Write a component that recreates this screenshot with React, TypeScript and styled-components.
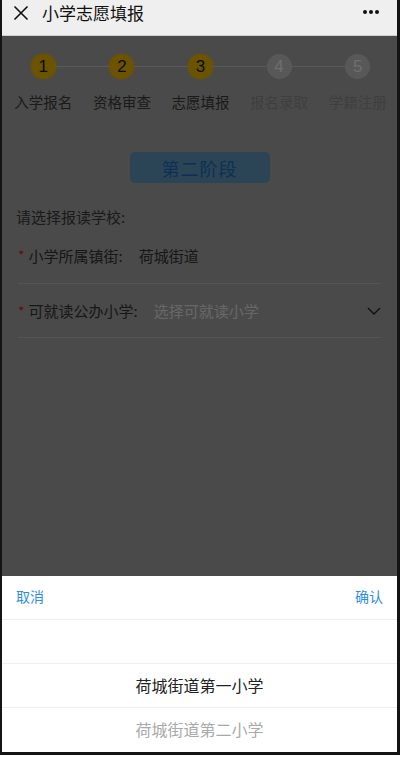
import React from 'react'
import styled, { createGlobalStyle } from 'styled-components'

const GlobalStyle = createGlobalStyle`
  html, body {
    margin: 0;
    padding: 0;
    background: #ffffff;
  }
  body {
    font-family: "Noto Sans CJK SC", "Noto Sans", "Liberation Sans", sans-serif;
  }
`

const Frame = styled.div`
  position: relative;
  width: 400px;
  height: 755px;
  box-sizing: border-box;
  border-left: 2px solid #141414;
  border-right: 3px solid #141414;
  border-bottom: 3px solid #141414;
  overflow: hidden;
  display: flex;
  flex-direction: column;
  background: #a4a4a4;
`

const TopBar = styled.div`
  height: 35px;
  flex-shrink: 0;
  background: #efefef;
  border-bottom: 1px solid #cfcfcf;
  display: flex;
  align-items: flex-start;
  padding: 0 16px 0 11px;
  position: relative;
  z-index: 3;
`

const CloseIcon = styled.svg`
  width: 16px;
  height: 16px;
  margin-top: 5px;
  flex-shrink: 0;
`

const Title = styled.div`
  margin-left: 13px;
  font-size: 17px;
  line-height: 26px;
  color: #111;
  flex: 1;
`

const Dots = styled.div`
  display: flex;
  gap: 2px;
  margin-top: 10px;
  margin-right: 2px;
`

const Dot = styled.span`
  width: 4px;
  height: 4px;
  border-radius: 50%;
  background: #111;
`

const Page = styled.div`
  flex: 1;
  display: flex;
  flex-direction: column;
`

const Steps = styled.div`
  display: flex;
  padding: 18px 0 0 2px;
`

const Step = styled.div`
  flex: 1;
  display: flex;
  flex-direction: column;
  align-items: center;
  position: relative;
`

const Connector = styled.span<{ $side: 'left' | 'right' }>`
  position: absolute;
  top: 12px;
  height: 1px;
  background: #c6c6c6;
  ${(p) => (p.$side === 'left' ? 'left: 0; right: calc(50% + 12px);' : 'right: 0; left: calc(50% + 12px);')}
`

const Circle = styled.div<{ $done: boolean }>`
  width: 25px;
  height: 25px;
  border-radius: 50%;
  background: ${(p) => (p.$done ? '#eeb800' : '#c4c4c4')};
  color: ${(p) => (p.$done ? '#1a1a1a' : '#f2f2f2')};
  font-family: "Liberation Sans", "Noto Sans", sans-serif;
  font-size: 17px;
  display: flex;
  align-items: center;
  justify-content: center;
  box-shadow: ${(p) => (p.$done ? '0 0 2px 1px rgba(238,184,0,0.5)' : 'none')};
`

const StepLabel = styled.div<{ $done: boolean }>`
  margin-top: 14px;
  font-size: 14.5px;
  line-height: 18px;
  color: ${(p) => (p.$done ? '#3a3a3a' : '#8c8c8c')};
  white-space: nowrap;
`

const StageWrap = styled.div`
  display: flex;
  justify-content: center;
  margin-top: 41px;
`

const StageButton = styled.div`
  width: 140px;
  height: 31px;
  border-radius: 5px;
  background: #6199c0;
  color: #1f6cb4;
  font-size: 18px;
  display: flex;
  align-items: center;
  justify-content: center;
  letter-spacing: 1px;
`

const Prompt = styled.div`
  margin: 24px 0 0 14px;
  font-size: 15px;
  line-height: 20px;
  color: #3a3a3a;
`

const Field = styled.div<{ $height: number }>`
  margin: 0 16px;
  height: ${(p) => p.$height}px;
  box-sizing: border-box;
  border-bottom: 1px solid #bcbcbc;
  display: flex;
  align-items: center;
`

const FirstField = styled(Field)`
  margin-top: 2px;
  padding-bottom: 2px;
`

const Star = styled.span`
  color: #d81e1e;
  font-size: 14px;
  margin-right: 4px;
`

const Label = styled.span`
  font-size: 15px;
  color: #333;
  margin-right: 16px;
  white-space: nowrap;
`

const Value = styled.span<{ $placeholder?: boolean }>`
  flex: 1;
  font-size: 15px;
  color: ${(p) => (p.$placeholder ? '#e4e4e4' : '#333')};
`

const Chevron = styled.svg`
  width: 14px;
  height: 8px;
  flex-shrink: 0;
`

const Mask = styled.div`
  position: absolute;
  inset: 0;
  background: rgba(0, 0, 0, 0.55);
  z-index: 1;
`

const Sheet = styled.div`
  position: absolute;
  left: 0;
  right: 0;
  bottom: 0;
  height: 176px;
  background: #fff;
  z-index: 2;
  display: flex;
  flex-direction: column;
`

const SheetHead = styled.div`
  height: 44px;
  flex-shrink: 0;
  display: flex;
  justify-content: space-between;
  align-items: center;
  padding: 0 14px 3px;
  box-sizing: border-box;
  border-bottom: 1px solid #efefef;
`

const SheetAction = styled.span`
  color: #2f8ee4;
  font-size: 14px;
`

const Option = styled.div<{ $tone: 'empty' | 'active' | 'muted' }>`
  height: 44px;
  flex-shrink: 0;
  box-sizing: border-box;
  padding-bottom: 2px;
  display: flex;
  align-items: center;
  justify-content: center;
  font-size: 16px;
  color: ${(p) => (p.$tone === 'active' ? '#222' : '#a9a9a9')};
  border-bottom: ${(p) => (p.$tone === 'muted' ? 'none' : '1px solid #efefef')};
`

const steps = [
  { n: 1, label: '入学报名', done: true },
  { n: 2, label: '资格审查', done: true },
  { n: 3, label: '志愿填报', done: true },
  { n: 4, label: '报名录取', done: false },
  { n: 5, label: '学籍注册', done: false },
]

const App: React.FC = () => (
  <>
    <GlobalStyle />
    <Frame>
      <TopBar>
        <CloseIcon viewBox="0 0 16 16">
          <path d="M1.5 1.5 L14.5 14.5 M14.5 1.5 L1.5 14.5" stroke="#111" strokeWidth="1.6" fill="none" />
        </CloseIcon>
        <Title>小学志愿填报</Title>
        <Dots>
          <Dot />
          <Dot />
          <Dot />
        </Dots>
      </TopBar>

      <Page>
        <Steps>
          {steps.map((s, i) => (
            <Step key={s.n}>
              {i > 0 && <Connector $side="left" />}
              {i < steps.length - 1 && <Connector $side="right" />}
              <Circle $done={s.done}>{s.n}</Circle>
              <StepLabel $done={s.done}>{s.label}</StepLabel>
            </Step>
          ))}
        </Steps>

        <StageWrap>
          <StageButton>第二阶段</StageButton>
        </StageWrap>

        <Prompt>请选择报读学校:</Prompt>

        <FirstField $height={55}>
          <Star>*</Star>
          <Label>小学所属镇街:</Label>
          <Value>荷城街道</Value>
        </FirstField>

        <Field $height={54}>
          <Star>*</Star>
          <Label>可就读公办小学:</Label>
          <Value $placeholder>选择可就读小学</Value>
          <Chevron viewBox="0 0 14 8">
            <path d="M1 1 L7 7 L13 1" stroke="#222" strokeWidth="1.4" fill="none" />
          </Chevron>
        </Field>
      </Page>

      <Mask />

      <Sheet>
        <SheetHead>
          <SheetAction>取消</SheetAction>
          <SheetAction>确认</SheetAction>
        </SheetHead>
        <Option $tone="empty" />
        <Option $tone="active">荷城街道第一小学</Option>
        <Option $tone="muted">荷城街道第二小学</Option>
      </Sheet>
    </Frame>
  </>
)

export default App
